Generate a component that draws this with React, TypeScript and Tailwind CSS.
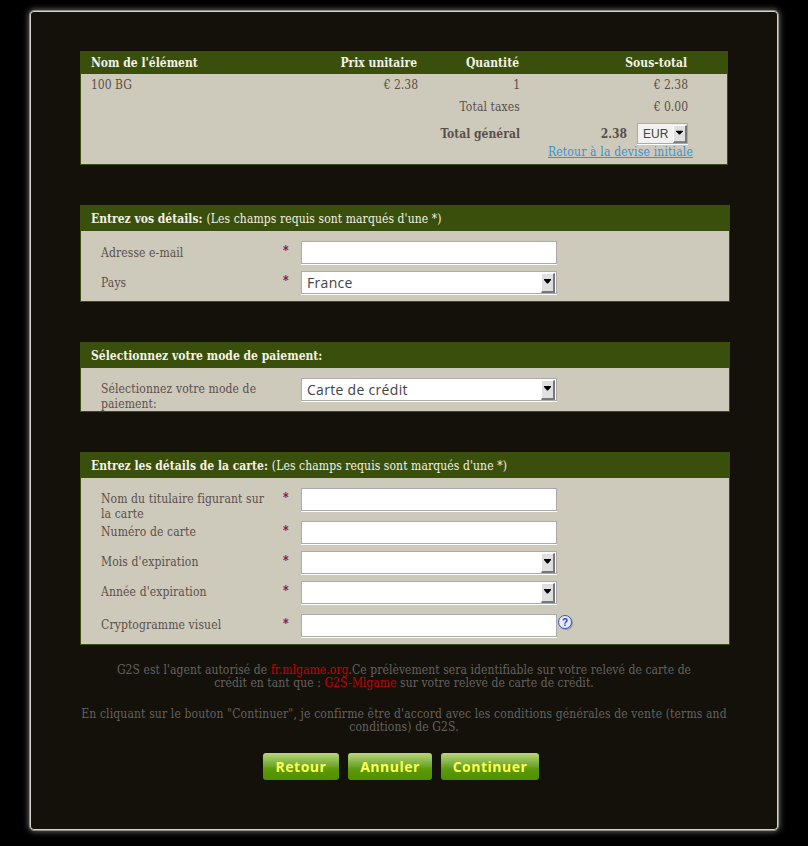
import React from "react";

const serif = "font-['DejaVu_Serif_Condensed','DejaVu_Serif',serif]";

function Arrow() {
  return (
    <div className="flex h-[20px] w-[14px] items-center justify-center border-t border-l border-t-white border-l-white border-r-2 border-b-2 border-r-[#777] border-b-[#777] bg-[#e0e0e0]">
      <svg width="7" height="5" viewBox="0 0 7 5" className="mb-[2px]">
        <path d="M0 0h7v1L4 4.5h-1L0 1z" fill="#000" />
      </svg>
    </div>
  );
}

function TextBox() {
  return <div className="h-[23px] w-[256px] border border-[#aaa] bg-white shadow-[0_1px_0_#fff]" />;
}

function SelectBox({ value }: { value?: string }) {
  return (
    <div className="flex h-[23px] w-[256px] items-center justify-between border border-[#aaa] bg-white pl-[5px] pr-[1px] font-['Open_Sans',sans-serif] text-[14px] tracking-[0.3px] text-[#444] shadow-[0_1px_0_#fff]">
      <span>{value}</span>
      <Arrow />
    </div>
  );
}

function Row({ label, h, children, extra, pad = "pt-[4px]" }: { label: string; h: string; children: React.ReactNode; extra?: React.ReactNode; pad?: string }) {
  return (
    <div className={`flex items-start ${h}`}>
      <div className={`w-[182px] ${pad} pr-[12px] text-[12px] leading-[15px] tracking-[0.12px] text-[#5a4f4a]`}>{label}</div>
      <div className="w-[18px] pt-[3px] text-[12px] leading-[15px] font-bold text-[#8b0033]">{extra ?? "*"}</div>
      {children}
    </div>
  );
}

function Panel({ title, note, children }: { title: string; note?: string; children: React.ReactNode }) {
  return (
    <section className="mt-[40px] w-[650px] border border-t-0 border-[#3a4f0b] bg-[#cdc9bb]">
      <div className="-mx-[1px] flex h-[26px] items-center bg-[#3a4f0b] pt-[1px] pl-[11px] text-[12px] text-[#f4f2e6]">
        <b>{title}</b>
        {note && <span className="ml-[4px] tracking-[0.1px]">{note}</span>}
      </div>
      <div className="pt-[10px] pl-[20px]">{children}</div>
    </section>
  );
}

function Btn({ children, w }: { children: string; w: string }) {
  return (
    <button className={`h-[27px] ${w} rounded-[3px] bg-gradient-to-b from-[#b9d879] via-[#5c9a06] via-[60%] to-[#4f9000] pb-[1px] font-['Open_Sans',sans-serif] text-[14px] font-bold tracking-[0.5px] text-[#ffff55]`}>
      {children}
    </button>
  );
}

export default function App() {
  return (
    <div className={`h-[846px] overflow-hidden bg-black pt-[10px] pl-[29px] ${serif}`}>
      <div className="h-[821px] w-[750px] rounded-[5px] border border-[#8a8880] bg-[#14110a] px-[50px] pt-[40px] shadow-[inset_0_0_0_1px_#d8d5c8,0_0_6px_#777]">
        <div className="w-[648px] border border-t-0 border-[#3a4f0b] bg-[#cdc9bb] pb-[4px] text-[12px] text-[#5a4f4a]">
          <div className="-mx-[1px] grid h-[23px] grid-cols-[238px_100px_102px_168px_40px] items-center bg-[#3a4f0b] font-bold text-[#f4f2e6]">
            <div className="pl-[11px]">Nom de l'élément</div>
            <div className="pr-[1px] text-right">Prix unitaire</div>
            <div className="pr-[1px] text-right">Quantité</div>
            <div className="pr-[1px] text-right">Sous-total</div>
          </div>
          <div className="grid h-[22px] grid-cols-[237px_100px_102px_168px] items-center">
            <div className="pl-[10px]">100 BG</div>
            <div className="text-right">€ 2.38</div>
            <div className="text-right">1</div>
            <div className="text-right">€ 2.38</div>
          </div>
          <div className="grid h-[22px] grid-cols-[237px_100px_102px_168px] items-center">
            <div className="col-start-3 text-right tracking-[0.12px]">Total taxes</div>
            <div className="text-right">€ 0.00</div>
          </div>
          <div className="grid h-[26px] grid-cols-[237px_100px_102px_168px] items-center pt-[5px]">
            <div className="col-start-3 text-right font-bold">Total général</div>
            <div className="flex items-center justify-end gap-[10px]">
              <b>2.38</b>
              <div className="flex h-[21px] w-[51px] items-center justify-between border border-[#aaa] bg-[#f1f1f1] pl-[5px] font-['Liberation_Sans',sans-serif] text-[12px] text-[#444] shadow-[0_1px_0_#fff]">
                EUR
                <div className="scale-y-90"><Arrow /></div>
              </div>
            </div>
          </div>
          <div className="flex h-[16px] items-center justify-end pr-[34px]">
            <a className="tracking-[0.18px] text-[#3a90d0] underline">Retour à la devise initiale</a>
          </div>
        </div>

        <Panel title="Entrez vos détails:" note="(Les champs requis sont marqués d'une *)">
          <Row label="Adresse e-mail" h="h-[30px]" pad="pt-[5px]"><TextBox /></Row>
          <Row label="Pays" h="h-[30px]" pad="pt-[5px]"><SelectBox value="France" /></Row>
        </Panel>

        <Panel title="Sélectionnez votre mode de paiement:">
          <Row label="Sélectionnez votre mode de paiement:" h="h-[33px]" extra=" " pad="pt-[4px]"><SelectBox value="Carte de crédit" /></Row>
        </Panel>

        <Panel title="Entrez les détails de la carte:" note="(Les champs requis sont marqués d'une *)">
          <Row label="Nom du titulaire figurant sur la carte" h="h-[33px]"><TextBox /></Row>
          <Row label="Numéro de carte" h="h-[30px]"><TextBox /></Row>
          <Row label="Mois d'expiration" h="h-[30px]"><SelectBox /></Row>
          <Row label="Année d'expiration" h="h-[33px]"><SelectBox /></Row>
          <Row label="Cryptogramme visuel" h="h-[30px]">
            <TextBox />
            <span className="mt-[1px] ml-[1px] flex h-[14px] w-[14px] items-center justify-center rounded-full border border-[#3b55c8] bg-[#e6ecff] font-['Liberation_Sans',sans-serif] text-[10px] font-bold text-[#2a40b0] shadow-[1px_1px_1px_#999]">?</span>
          </Row>
        </Panel>

        <p className="mt-[19px] w-[650px] pr-[2px] text-center text-[12px] leading-[13px] tracking-[0.07px] text-[#646260]">
          G2S est l'agent autorisé de <span className="text-[#c40000]">fr.mlgame.org</span>.Ce prélèvement sera identifiable sur votre relevé de carte de
          <br />
          crédit en tant que : <span className="text-[#c40000]">G2S-Mlgame</span> sur votre relevé de carte de crédit.
        </p>
        <p className="mt-[18px] w-[650px] pr-[2px] text-center text-[12px] leading-[13px] tracking-[0.14px] text-[#646260]">
          En cliquant sur le bouton "Continuer", je confirme être d'accord avec les conditions générales de vente (terms and
          <br />
          conditions) de G2S.
        </p>
        <div className="mt-[19px] flex w-[650px] justify-center gap-[9px] pr-[8px]">
          <Btn w="w-[76px]">Retour</Btn>
          <Btn w="w-[84px]">Annuler</Btn>
          <Btn w="w-[98px]">Continuer</Btn>
        </div>
      </div>
    </div>
  );
}
